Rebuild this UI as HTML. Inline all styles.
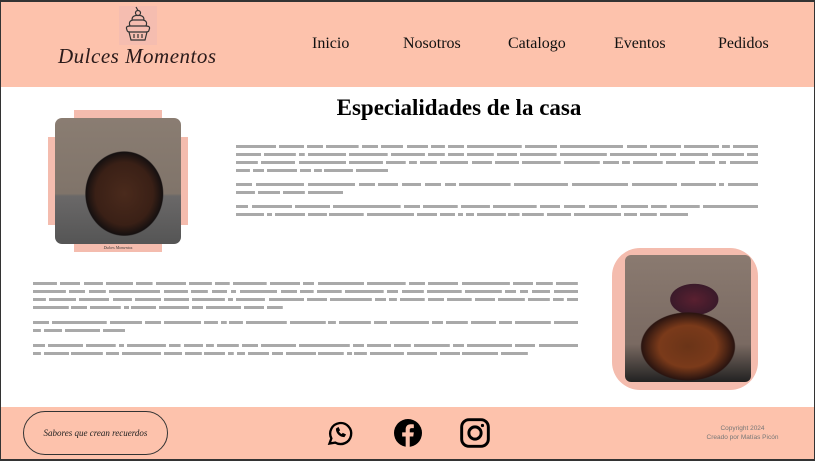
<!DOCTYPE html>
<html><head><meta charset="utf-8">
<style>
*{margin:0;padding:0;box-sizing:border-box}
body{width:815px;height:461px;overflow:hidden;background:#fff;font-family:"Liberation Serif",serif;position:relative}
.frame{position:absolute;left:0;top:0;width:815px;height:461px;border:1px solid #333;border-top:2px solid #333;border-bottom:2px solid #333;pointer-events:none;z-index:5}
header{position:absolute;left:0;top:0;width:815px;height:87px;background:#fdc2ac}
.logoicon{position:absolute;left:119px;top:6px;width:38px;height:39px;background:#f5bdb0}
.brand{position:absolute;left:58px;top:44px;font-family:"Liberation Serif",serif;font-style:italic;font-size:21px;color:#2a1a1a;letter-spacing:0.5px}
nav a{position:absolute;top:35px;font-size:16px;color:#111;text-decoration:none}
h1{position:absolute;left:0;width:918px;top:95px;text-align:center;font-family:"Liberation Serif",serif;font-size:23px;font-weight:bold;color:#000}
.txt{position:absolute;font-family:"Liberation Sans",sans-serif;font-size:10px;line-height:8px;color:transparent;text-align:justify}
.txt p{margin-bottom:6px}
.txt.b2 p{margin-bottom:7px}
.txt span{background:linear-gradient(#a9a9a9,#a9a9a9) center/100% 3px no-repeat}
.pk{position:absolute;background:#f4bcae}
.photo{position:absolute;border-radius:7px;overflow:hidden}
footer{position:absolute;left:0;top:407px;width:815px;height:54px;background:#fdc2ac}
.pill{position:absolute;left:23px;top:4px;width:145px;height:44px;border:1px solid #333;border-radius:22px;font-style:italic;font-size:9px;color:#222;text-align:center;line-height:42px}
.copy{position:absolute;left:690px;top:17px;width:105px;text-align:center;font-family:"Liberation Sans",sans-serif;font-size:6.5px;line-height:9px;color:#777}
svg.ic{position:absolute}
</style></head><body>
<header>
  <div class="logoicon">
    <svg width="38" height="39" viewBox="0 0 38 39" fill="none" stroke="#333" stroke-width="1.2">
      <circle cx="19" cy="7" r="2.5"/><path d="M19 4.5 L17 1"/>
      <path d="M13 14 Q13 9 19 9.5 Q25 9 25 14 M11 20 Q9 15 14 14 L24 14 Q29 15 27 20"/>
      <path d="M8 24 Q6 20 11 20 L27 20 Q32 20 30 24 Q30 26 27 26 L11 26 Q8 26 8 24Z"/>
      <path d="M10 26 L12 34 L26 34 L28 26 M15 28 V32 M19 28 V32 M23 28 V32"/>
    </svg>
  </div>
  <div class="brand">Dulces Momentos</div>
  <nav><a style="left:312px">Inicio</a><a style="left:403px">Nosotros</a><a style="left:508px">Catalogo</a><a style="left:614px">Eventos</a><a style="left:718px">Pedidos</a></nav>
</header>
<h1>Especialidades de la casa</h1>

<div class="pk" style="left:74px;top:110px;width:88px;height:142px"></div>
<div class="pk" style="left:48px;top:137px;width:140px;height:88px"></div>
<div class="photo" style="left:55px;top:118px;width:126px;height:126px;background:radial-gradient(ellipse 48px 52px at 55% 60%,#4a2a1c 0,#3a2016 60%,#151010 80%,transparent 82%),linear-gradient(#8a7d72 0,#80746a 60%,#6a6868 62%,#555 100%)"></div>
<div style="position:absolute;left:74px;top:245px;width:88px;text-align:center;font-size:4px;color:#333;font-style:italic">Dulces Momentos</div>

<div class="pk" style="left:612px;top:248px;width:146px;height:142px;border-radius:28px"></div>
<div class="photo" style="left:625px;top:255px;width:126px;height:127px;border-radius:6px;background:radial-gradient(ellipse 58px 42px at 50% 72%,#6a3418 0,#7a3a1a 50%,#2a1410 80%,transparent 82%),radial-gradient(ellipse 34px 22px at 55% 35%,#5a2030 0,#3a1a2a 70%,transparent 72%),linear-gradient(#8a7a70,#7a6a62 70%,#222 100%)"></div>

<div class="txt" style="left:236px;top:143px;width:522px">
<p><span>Nuestras</span> <span>tortas</span> <span>son</span> <span>hechas</span> <span>con</span> <span>amor</span> <span>cada</span> <span>día</span> <span>con</span> <span>ingredientes</span> <span>frescos</span> <span>seleccionados</span> <span>para</span> <span>ofrecer</span> <span>siempre</span> <span>el</span> <span>mejor</span> <span>sabor</span> <span>posible</span> <span>a</span> <span>nuestros</span> <span>queridos</span> <span>clientes</span> <span>que</span> <span>nos</span> <span>eligen</span> <span>para</span> <span>celebrar</span> <span>momentos</span> <span>especiales</span> <span>con</span> <span>familia</span> <span>amigos</span> <span>en</span> <span>cada</span> <span>ocasión</span> <span>importante</span> <span>durante</span> <span>todo</span> <span>el</span> <span>año</span> <span>entero</span> <span>para</span> <span>todos</span> <span>nosotros</span> <span>siempre</span> <span>con</span> <span>la</span> <span>misma</span> <span>pasión</span> <span>que</span> <span>el</span> <span>primer</span> <span>día</span> <span>de</span> <span>trabajo</span> <span>en</span> <span>la</span> <span>cocina</span> <span>familiar</span></p>
<p><span>Las</span> <span>creaciones</span> <span>especiales</span> <span>son</span> <span>para</span> <span>todo</span> <span>tipo</span> <span>de</span> <span>celebración</span> <span>cumpleaños</span> <span>casamientos</span> <span>bautismos</span> <span>eventos</span> <span>y</span> <span>mucho</span> <span>más</span> <span>amor</span> <span>cada</span> <span>semana</span></p>
<p><span>Se</span> <span>preparan</span> <span>pedidos</span> <span>personalizados</span> <span>con</span> <span>diseños</span> <span>únicos</span> <span>pensados</span> <span>para</span> <span>cada</span> <span>cliente</span> <span>según</span> <span>sus</span> <span>gustos</span> <span>preferencias</span> <span>estilos</span> <span>y</span> <span>mucho</span> <span>más</span> <span>detalles</span> <span>especiales</span> <span>para</span> <span>vos</span> <span>y</span> <span>tu</span> <span>familia</span> <span>en</span> <span>cada</span> <span>fecha</span> <span>importante</span> <span>del</span> <span>año</span> <span>entero</span></p>
</div>
<div class="txt b2" style="left:33px;top:280px;width:545px">
<p><span>Cada</span> <span>torta</span> <span>está</span> <span>hecha</span> <span>con</span> <span>mucho</span> <span>amor</span> <span>por</span> <span>nuestro</span> <span>equipo</span> <span>de</span> <span>pasteleros</span> <span>expertos</span> <span>con</span> <span>mucha</span> <span>dedicación</span> <span>para</span> <span>que</span> <span>cada</span> <span>bocado</span> <span>sea</span> <span>una</span> <span>experiencia</span> <span>única</span> <span>que</span> <span>vas</span> <span>a</span> <span>recordar</span> <span>con</span> <span>tus</span> <span>seres</span> <span>queridos</span> <span>en</span> <span>cada</span> <span>ocasión</span> <span>especial</span> <span>de</span> <span>tu</span> <span>vida</span> <span>diaria</span> <span>sin</span> <span>dudas</span> <span>alguna</span> <span>más</span> <span>veces</span> <span>tortas</span> <span>postres</span> <span>y</span> <span>dulces</span> <span>caseros</span> <span>para</span> <span>compartir</span> <span>en</span> <span>la</span> <span>mesa</span> <span>con</span> <span>todos</span> <span>ellos</span> <span>juntos</span> <span>cada</span> <span>fin</span> <span>de</span> <span>semana</span> <span>con</span> <span>alegría</span> <span>y</span> <span>sabor</span> <span>casero</span> <span>de</span> <span>siempre</span> <span>para</span> <span>vos</span></p>
<p><span>Los</span> <span>ingredientes</span> <span>frescos</span> <span>son</span> <span>elegidos</span> <span>día</span> <span>a</span> <span>día</span> <span>cuidando</span> <span>siempre</span> <span>la</span> <span>calidad</span> <span>del</span> <span>producto</span> <span>en</span> <span>cada</span> <span>etapa</span> <span>del</span> <span>proceso</span> <span>hasta</span> <span>el</span> <span>final</span> <span>pedidos</span> <span>listos</span></p>
<p><span>Se</span> <span>realizan</span> <span>envíos</span> <span>a</span> <span>domicilio</span> <span>en</span> <span>toda</span> <span>la</span> <span>zona</span> <span>con</span> <span>pedidos</span> <span>anticipados</span> <span>de</span> <span>hasta</span> <span>una</span> <span>semana</span> <span>de</span> <span>antelación</span> <span>para</span> <span>asegurar</span> <span>la</span> <span>mejor</span> <span>calidad</span> <span>del</span> <span>producto</span> <span>final</span> <span>que</span> <span>llega</span> <span>a</span> <span>tu</span> <span>casa</span> <span>en</span> <span>tiempo</span> <span>forma</span> <span>y</span> <span>sin</span> <span>demora</span> <span>alguna</span> <span>para</span> <span>disfrutar</span> <span>juntos</span></p>
</div>

<footer>
  <div class="pill">Sabores que crean recuerdos</div>
  <svg class="ic" style="left:326px;top:12px" width="28" height="28" viewBox="0 0 24 24" fill="none" stroke="#000" stroke-width="2"><path d="M3 21l1.6-4.4A9 9 0 1 1 8 20.2z"/><path d="M9 8.5c0 3.5 3 6.5 6.5 6.5l1-1.5-2-1-1 1c-1.2-.5-2.5-1.8-3-3l1-1-1-2z" fill="#000" stroke-width="1"/></svg>
  <svg class="ic" style="left:394px;top:12px" width="28" height="28" viewBox="0 0 24 24"><circle cx="12" cy="12" r="12" fill="#000"/><path d="M13.5 24V15h3l.5-3.5h-3.5V9.5c0-1 .3-1.7 1.8-1.7H17V4.6c-.4 0-1.5-.1-2.7-.1-2.7 0-4.3 1.6-4.3 4.5v2.5H7V15h3v9z" fill="#fdc2ac"/></svg>
  <svg class="ic" style="left:459px;top:10px" width="32" height="32" viewBox="0 0 24 24" fill="none" stroke="#000" stroke-width="2.2"><rect x="2" y="2" width="20" height="20" rx="5.5"/><circle cx="12" cy="12" r="4.6"/><circle cx="17.6" cy="6.4" r="1.2" fill="#000" stroke="none"/></svg>
  <div class="copy">Copyright 2024<br>Creado por Matías Picón</div>
</footer>
<div class="frame"></div>
</body></html>
